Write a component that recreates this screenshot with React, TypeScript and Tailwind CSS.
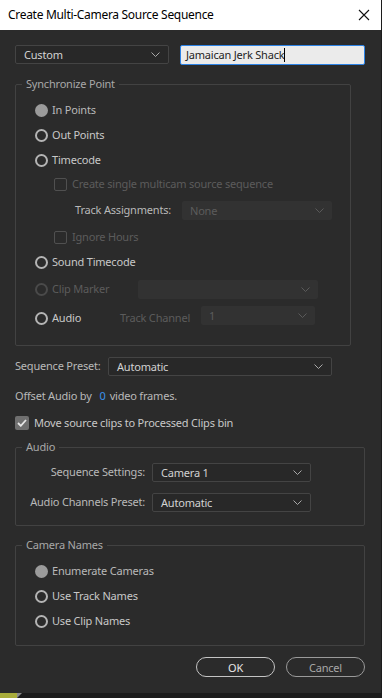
import React from "react";

const font = { fontFamily: '"Noto Sans", "Open Sans", sans-serif' };

function Chevron({ dim }: { dim?: boolean }) {
    return (
        <svg width="9" height="5" viewBox="0 0 9 5" className="flex-none">
            <path d="M0.5 0.5 L4.5 4.5 L8.5 0.5" fill="none" stroke={dim ? "#5a5a5a" : "#a8a8a8"} strokeWidth="1" />
        </svg>
    );
}

function Select({ value, className, disabled }: { value: string; className: string; disabled?: boolean }) {
    return (
        <div
            className={
                "flex items-center justify-between h-[19px] rounded-[2px] pl-[8px] pr-[8px] " +
                (disabled
                    ? "bg-[#323232] text-[#5c5c5c] "
                    : "bg-[#282828] border border-[#444444] text-[#d2d2d2] ") +
                className
            }
        >
            <span className="leading-none whitespace-nowrap">{value}</span>
            <Chevron dim={disabled} />
        </div>
    );
}

function Radio({ label, on, disabled }: { label: string; on?: boolean; disabled?: boolean }) {
    return (
        <div className="flex items-center gap-[4px] pl-[19px] whitespace-nowrap">
            {on ? (
                <span className="w-[13px] h-[13px] rounded-full bg-[#9b9b9b]" />
            ) : (
                <span
                    className={
                        "w-[13px] h-[13px] rounded-full border-2 " +
                        (disabled ? "border-[#4a4a4a]" : "border-[#b4b4b4]")
                    }
                />
            )}
            <span className={disabled ? "text-[#5c5c5c]" : on ? "text-[#b9b9b9]" : "text-[#c8c8c8]"}>{label}</span>
        </div>
    );
}

function Check({ label, disabled }: { label: string; disabled?: boolean }) {
    return (
        <div className="flex items-center gap-[5px] pl-[38px] whitespace-nowrap">
            <span className="w-[13px] h-[13px] rounded-[2px] border border-[#505050]" />
            <span className={disabled ? "text-[#5c5c5c]" : "text-[#c8c8c8]"}>{label}</span>
        </div>
    );
}

function Group({ title, className, children }: { title: string; className: string; children: React.ReactNode }) {
    return (
        <fieldset className={"border border-[#424242] rounded-[2px] " + className}>
            <legend className="ml-[6px] px-[4px] leading-[14px] text-[#a8a8a8]">{title}</legend>
            {children}
        </fieldset>
    );
}

export default function App() {
    return (
        <div
            className="w-[382px] h-[698px] bg-[#1c1c1c] flex flex-col overflow-hidden text-[11px] tracking-[-0.2px]"
            style={font}
        >
            <div className="w-[381px] h-[693px] bg-[#2b2b2b] flex flex-col flex-none">
                <div className="h-[30px] bg-white flex items-center justify-between pl-[8px] pr-[11px] flex-none">
                    <span className="text-[12px] tracking-[-0.3px] text-black">Create Multi-Camera Source Sequence</span>
                    <svg width="12" height="12" viewBox="0 0 12 12">
                        <path d="M1 1 L11 11 M11 1 L1 11" stroke="#111" strokeWidth="1.1" />
                    </svg>
                </div>

                <div className="flex flex-col px-[15px] pt-[15px]">
                    <div className="flex gap-[11px] items-start">
                        <Select value="Custom" className="w-[154px]" />
                        <div className="w-[185px] h-[20px] bg-[#ebebeb] border-[1.5px] border-[#2d83e6] rounded-[2px] flex items-center pl-[5px] text-[#1e1e1e]">
                            <span>Jamaican Jerk Shack</span>
                            <span className="w-[1px] h-[14px] bg-black" />
                        </div>
                    </div>

                    <Group title="Synchronize Point" className="w-[336px] mt-[12px] pt-[7px] pb-[11px]">
                        <div className="h-[25px] flex items-center">
                            <Radio label="In Points" on />
                        </div>
                        <div className="h-[25px] flex items-center">
                            <Radio label="Out Points" />
                        </div>
                        <div className="h-[25px] flex items-center">
                            <Radio label="Timecode" />
                        </div>
                        <div className="h-[22px] flex items-center">
                            <Check label="Create single multicam source sequence" disabled />
                        </div>
                        <div className="h-[31px] flex items-center">
                            <span className="w-[155px] text-right text-[#b9b9b9] whitespace-nowrap">Track Assignments:</span>
                            <Select value="None" className="w-[150px] ml-[11px]" disabled />
                        </div>
                        <div className="h-[22px] flex items-center">
                            <Check label="Ignore Hours" disabled />
                        </div>
                        <div className="h-[28px] flex items-center">
                            <Radio label="Sound Timecode" />
                        </div>
                        <div className="h-[26px] flex items-center">
                            <div className="w-[122px]">
                                <Radio label="Clip Marker" disabled />
                            </div>
                            <Select value="" className="w-[180px]" disabled />
                        </div>
                        <div className="h-[32px] flex items-center">
                            <div className="w-[104px]">
                                <Radio label="Audio" />
                            </div>
                            <span className="text-[#5c5c5c] w-[81px] whitespace-nowrap">Track Channel</span>
                            <Select value="1" className="w-[114px] mb-[5px]" disabled />
                        </div>
                    </Group>

                    <div className="flex items-center mt-[11px] h-[19px]">
                        <span className="w-[93px] text-[#b9b9b9] whitespace-nowrap">Sequence Preset:</span>
                        <Select value="Automatic" className="w-[224px]" />
                    </div>

                    <div className="flex items-center mt-[10px] h-[20px] text-[#b9b9b9] whitespace-nowrap">
                        <span>Offset Audio by</span>
                        <span className="text-[#3a92ec] ml-[8px] mr-[4px]">0</span>
                        <span>video frames.</span>
                    </div>

                    <div className="flex items-center mt-[7px] h-[20px] gap-[5px]">
                        <span className="w-[14px] h-[14px] rounded-[2px] bg-[#6f6f6f] flex items-center justify-center">
                            <svg width="10" height="8" viewBox="0 0 10 8">
                                <path d="M1 4 L3.8 6.8 L9 1" fill="none" stroke="#e6e6e6" strokeWidth="1.8" />
                            </svg>
                        </span>
                        <span className="text-[#c8c8c8] whitespace-nowrap">Move source clips to Processed Clips bin</span>
                    </div>

                    <Group title="Audio" className="w-[350px] mt-[7px] pt-[9px] pb-[13px]">
                        <div className="flex items-center h-[19px]">
                            <span className="w-[129px] text-right text-[#b9b9b9] whitespace-nowrap">Sequence Settings:</span>
                            <Select value="Camera 1" className="w-[159px] ml-[7px]" />
                        </div>
                        <div className="flex items-center h-[19px] mt-[11px]">
                            <span className="w-[129px] text-right text-[#b9b9b9] whitespace-nowrap">Audio Channels Preset:</span>
                            <Select value="Automatic" className="w-[159px] ml-[7px]" />
                        </div>
                    </Group>

                    <Group title="Camera Names" className="w-[350px] mt-[12px] pt-[7px] pb-[11px]">
                        <div className="h-[25px] flex items-center">
                            <Radio label="Enumerate Cameras" on />
                        </div>
                        <div className="h-[25px] flex items-center">
                            <Radio label="Use Track Names" />
                        </div>
                        <div className="h-[25px] flex items-center">
                            <Radio label="Use Clip Names" />
                        </div>
                    </Group>

                    <div className="flex justify-end gap-[11px] mt-[11px] w-[350px]">
                        <button className="w-[79px] h-[20px] rounded-full border border-[#c4c4c4] text-[#e6e6e6] leading-none">
                            OK
                        </button>
                        <button className="w-[79px] h-[20px] rounded-full border border-[#9a9a9a] text-[#a8a8a8] leading-none">
                            Cancel
                        </button>
                    </div>
                </div>
            </div>
            <div className="flex-1 flex">
                <div className="w-[17px] bg-[#a9ad3c]" />
                <div className="w-0 h-0 border-t-[5px] border-t-[#8a8a8a] border-r-[5px] border-r-transparent" />
            </div>
        </div>
    );
}
